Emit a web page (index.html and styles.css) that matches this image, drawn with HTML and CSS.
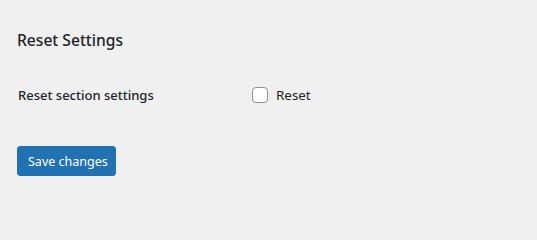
FILE: index.html
```html
<!DOCTYPE html>
<html>
<head>
<meta charset="utf-8">
<link rel="stylesheet" href="styles.css">
</head>
<body>
<div class="wrap">
  <h2 class="title">Reset Settings</h2>
  <div class="form-row">
    <div class="label">Reset section settings</div>
    <label class="field"><span class="checkbox"></span><span>Reset</span></label>
  </div>
  <div class="submit">
    <button class="button-primary" type="button">Save changes</button>
  </div>
</div>
</body>
</html>
```
FILE: styles.css
```css
html, body {
  margin: 0;
  padding: 0;
  background: #f0f0f1;
}
body {
  font-family: "Noto Sans", "Open Sans", sans-serif;
  color: #1d2327;
  font-size: 14px;
}
.wrap {
  padding: 29px 0 0 17px;
}
.title {
  margin: 0;
  font-size: 15.6px;
  font-weight: 500;
  line-height: 22px;
}
.form-row {
  display: flex;
  align-items: center;
  margin-top: 32px;
  height: 24px;
}
.label {
  width: 234px;
  padding-left: 1px;
  font-weight: 500;
  font-size: 13px;
}
.field {
  display: flex;
  align-items: center;
  gap: 8px;
  font-size: 13.4px;
}
.checkbox {
  width: 14px;
  height: 14px;
  border: 1px solid #8c8f94;
  border-radius: 4px;
  background: #fff;
}
.submit {
  margin-top: 39px;
}
.button-primary {
  background: #2271b1;
  border: 1px solid #2271b1;
  color: #fff;
  border-radius: 3px;
  font-family: inherit;
  font-size: 12.5px;
  height: 30px;
  padding: 0 10px;
  width: 99px;
  white-space: nowrap;
}
```
